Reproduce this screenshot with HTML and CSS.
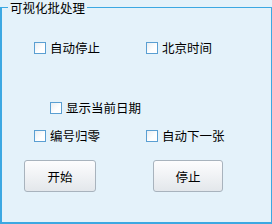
FILE: index.html
```html
<!DOCTYPE html>
<html lang="zh-CN">
<head>
    <meta charset="UTF-8">
    <title>可视化批处理</title>
    <link rel="stylesheet" href="styles.css">
</head>
<body>
    <fieldset class="group">
        <legend>可视化批处理</legend>

        <div class="row">
            <label class="check col-left"><span class="box"></span>自动停止</label>
            <label class="check col-right"><span class="box"></span>北京时间</label>
        </div>

        <div class="row row-mid">
            <label class="check"><span class="box"></span>显示当前日期</label>
        </div>

        <div class="row row-low">
            <label class="check col-left"><span class="box"></span>编号归零</label>
            <label class="check col-right"><span class="box"></span>自动下一张</label>
        </div>

        <div class="buttons">
            <button type="button" class="btn btn-start">开始</button>
            <button type="button" class="btn btn-stop">停止</button>
        </div>
    </fieldset>
</body>
</html>
```

FILE: styles.css
```css
/* 可视化批处理 */
body {
    font-family: "Noto Sans CJK SC", "Liberation Sans", sans-serif;
    font-size: 12.5px;
    line-height: 15px;
    color: #000;
    background-color: #e4f2fa;
    margin: 0;
    width: 272px;
    height: 224px;
    overflow: hidden;
}

.group {
    box-sizing: border-box;
    height: 224px;
    margin: 0;
    padding: 0;
    min-width: 0;
    border-style: solid;
    border-color: #3ca8e2;
    border-width: 1px 1px 2px 2px;
}

.group legend {
    margin-left: 6px;
    padding: 0 2px;
    line-height: 15px;
}

.row {
    display: flex;
    height: 13px;
    margin-top: 26px;
    padding-left: 32px;
}

.row-mid {
    margin-top: 47px;
    padding-left: 48px;
}

.row-low {
    margin-top: 15px;
}

.check {
    display: flex;
    align-items: center;
    gap: 4px;
    height: 13px;
}

.col-left {
    width: 112px;
}

.box {
    box-sizing: border-box;
    width: 12px;
    height: 12px;
    border: 1px solid #5a9fd2;
    background: linear-gradient(135deg, #e9eef2, #ffffff 60%);
}

.buttons {
    display: flex;
    margin-top: 18px;
    padding-left: 22px;
}

.btn {
    box-sizing: border-box;
    height: 32px;
    font-family: inherit;
    font-size: 12.5px;
    color: #000;
    border: 1px solid #a8b3bd;
    border-radius: 3px;
    background: linear-gradient(#fdfdfe, #e3e7eb);
    padding: 0;
}

.btn-start {
    width: 72px;
}

.btn-stop {
    width: 70px;
    margin-left: 57px;
}
```
